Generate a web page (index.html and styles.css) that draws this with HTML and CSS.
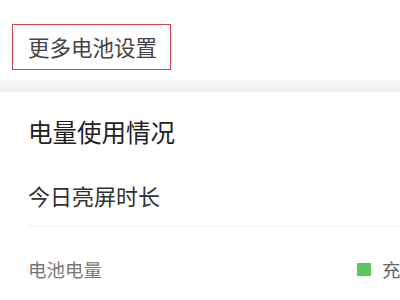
FILE: index.html
```html
<!DOCTYPE html>
<html lang="zh-CN">
  <head>
    <meta charset="UTF-8" />
    <meta name="viewport" content="width=device-width, initial-scale=1.0" />
    <title>电池</title>
    <link rel="stylesheet" href="styles.css">
  </head>
  <body>
    <!-- top: more settings entry -->
    <div class="top">
      <span class="more-btn">更多电池设置</span>
    </div>

    <div class="band"></div>

    <!-- usage card -->
    <div class="card">
      <div class="card-title">电量使用情况</div>
      <div class="row">今日亮屏时长</div>
      <div class="divider"></div>
      <div class="row-small">
        <span class="row-label">电池电量</span>
        <span class="legend"><i class="dot-green"></i>充电中</span>
      </div>
    </div>
  </body>
</html>
```

FILE: styles.css
```css
body {
  margin: 0;
  overflow: hidden;
  background: #fff;
  font-family: "Noto Sans CJK SC", "Noto Sans", sans-serif;
}

* {
  box-sizing: border-box;
}

.top {
  height: 80px;
  padding: 24px 0 0 12px;
}

.more-btn {
  display: inline-block;
  height: 46px;
  line-height: 44px;
  padding: 0 13px 0 15px;
  border: 1.5px solid #d0454b;
  font-size: 21.5px;
  color: #444;
}

.band {
  height: 12px;
  background: linear-gradient(#f7f7f7, #efefef);
}

.card {
  padding: 20px 0 0 28px;
}

.card-title {
  line-height: 40px;
  font-size: 24.5px;
  color: #222;
}

.row {
  margin-top: 23px;
  line-height: 40px;
  font-size: 22px;
  color: #333;
}

.divider {
  margin-top: 10px;
  height: 2px;
  background: #f6f6f6;
}

.row-small {
  display: flex;
  align-items: center;
  margin-top: 22px;
  height: 40px;
  white-space: nowrap;
}

.row-label {
  flex: 0 0 329px;
  font-size: 18.5px;
  color: #777;
}

.legend {
  display: flex;
  align-items: center;
  font-size: 18.5px;
  color: #666;
}

.dot-green {
  width: 14px;
  height: 13px;
  margin-right: 11px;
  background: #5cc75c;
}
```
